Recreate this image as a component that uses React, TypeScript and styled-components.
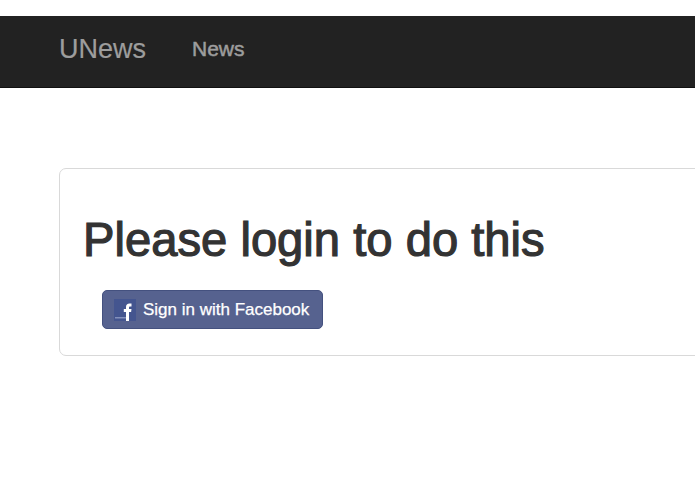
import React from "react";
import styled, { createGlobalStyle } from "styled-components";

const GlobalStyle = createGlobalStyle`
	html, body {
		margin: 0;
		padding: 0;
		background: #fff;
		overflow: hidden;
		font-family: "Liberation Sans", Arial, sans-serif;
	}
`;

export default function App() {
	return (
		<>
			<GlobalStyle />
			<Page>
				<Navbar>
					<Brand>UNews</Brand>
					<NavLink>News</NavLink>
				</Navbar>
				<Content>
					<Well>
						<Heading>Please login to do this</Heading>
						<FacebookButton>
							<FacebookIcon viewBox="0 0 22 22" aria-hidden="true">
								<rect width="22" height="22" fill="#44558f" />
								<rect x="1" y="18" width="13" height="1.500" fill="#8390bb" />
								<path d="M12 22v-9H9.800v-3H12V8c0-2.400 1.300-3.600 3.500-3.600h2v3h-1.300c-.9 0-1.200.4-1.200 1.200V10h2.500l-.4 3H15v9z" fill="#fff" />
							</FacebookIcon>
							Sign in with Facebook
						</FacebookButton>
					</Well>
				</Content>
			</Page>
		</>
	);
}

const Page = styled.div`
	width: 695px;
	height: 494px;
	padding-top: 16px;
	box-sizing: border-box;
	overflow: hidden;
`;

const Navbar = styled.nav`
	height: 72px;
	box-sizing: border-box;
	padding: 0 0 5px 59px;
	display: flex;
	align-items: center;
	background: #222;
	border-bottom: 1px solid #111;
`;

const Brand = styled.a`
	font-size: 27px;
	color: #9d9d9d;
	margin-right: 46px;
	-webkit-text-stroke: 0.2px #9d9d9d;
`;

const NavLink = styled.a`
	font-size: 21px;
	color: #9d9d9d;
	-webkit-text-stroke: 0.5px #9d9d9d;
`;

const Content = styled.main`
	padding: 80px 0 0 59px;
`;

const Well = styled.section`
	width: 700px;
	height: 188px;
	box-sizing: border-box;
	padding: 44px 23px 0;
	background: #fff;
	border: 1px solid #d9d9d9;
	border-radius: 7px;
`;

const Heading = styled.h1`
	margin: 0 0 23px;
	font-size: 47.200px;
	line-height: 54px;
	font-weight: 400;
	color: #333;
	-webkit-text-stroke: 1.200px #333;
`;

const FacebookButton = styled.button`
	margin-left: 19px;
	width: 221px;
	height: 39px;
	display: flex;
	align-items: center;
	gap: 7px;
	padding: 0 0 0 11px;
	box-sizing: border-box;
	font-family: inherit;
	font-size: 17px;
	color: #fff;
	-webkit-text-stroke: 0.25px #fff;
	background: #56628f;
	border: 1px solid #44517f;
	border-radius: 5px;
`;

const FacebookIcon = styled.svg`
	width: 22px;
	height: 22px;
`;
